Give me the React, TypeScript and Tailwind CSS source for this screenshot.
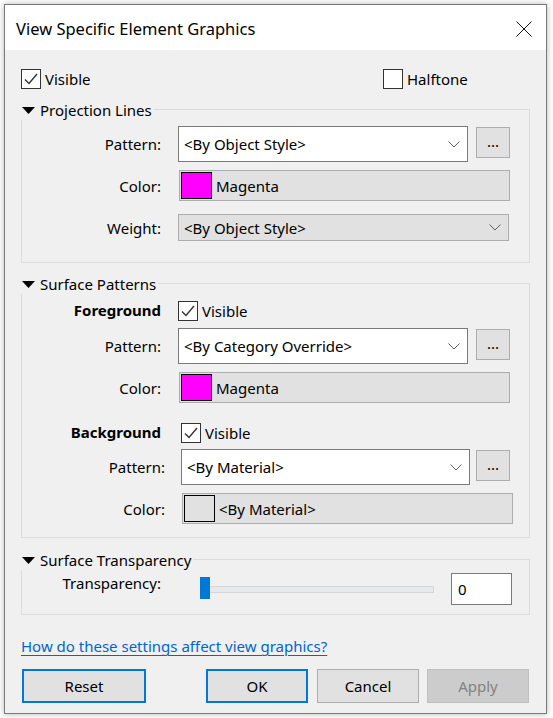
import React from "react";

function Chevron() {
  return (
    <svg width="12" height="7" viewBox="0 0 12 7" className="shrink-0">
      <polyline points="0.5,0.5 6,6 11.5,0.5" fill="none" stroke="#5f5f5f" strokeWidth="1" />
    </svg>
  );
}

function CheckBox({ checked }: { checked?: boolean }) {
  return (
    <span className="w-[20px] h-[20px] border border-[#333333] bg-white flex items-center justify-center shrink-0">
      {checked && (
        <svg width="18" height="18" viewBox="0 0 18 18">
          <polyline points="3,9.5 7,13.5 15,4" fill="none" stroke="#333333" strokeWidth="1.4" />
        </svg>
      )}
    </span>
  );
}

function GroupHeader({ title }: { title: string }) {
  return (
    <div className="flex items-end h-[20px]">
      <div className="flex items-center h-[20px] ml-[1px] pr-[2px]">
        <svg width="13" height="7" viewBox="0 0 13 7">
          <polygon points="0,0 13,0 6.5,7" fill="#000" />
        </svg>
        <span className="ml-[5px]">{title}</span>
      </div>
      <div className="flex-1 h-[11px] border-t border-r border-[#dcdcdc]" />
    </div>
  );
}

function Dropdown({ value, className }: { value: string; className: string }) {
  return (
    <div className={className}>
      <span>{value}</span>
      <Chevron />
    </div>
  );
}

function DotsButton() {
  return (
    <button className="w-[34px] h-[31px] bg-[#e1e1e1] border border-[#adadad] flex items-center justify-center leading-none pb-[2px]">
      ...
    </button>
  );
}

function ColorField({ swatch, label, className }: { swatch: string; label: string; className: string }) {
  return (
    <div className={className}>
      <span className={swatch} />
      <span className="ml-[4px]">{label}</span>
    </div>
  );
}

export default function App() {
  return (
    <div className="w-[553px] h-[718px] bg-white pt-[4px] pl-[4px] text-[15px] leading-[20px] text-black font-['Noto_Sans',sans-serif]">
      <div className="w-[543px] h-[710px] border border-[#7a7a7a] shadow-[0_0_6px_rgba(0,0,0,0.3)] flex flex-col">
        {/* title bar */}
        <div className="h-[45px] bg-white flex items-center justify-between pl-[11px] pr-[14px] pt-[2px]">
          <span className="text-[16.5px]">View Specific Element Graphics</span>
          <svg width="16" height="16" viewBox="0 0 16 16">
            <path d="M0.5 0.5 L15.5 15.5 M15.5 0.5 L0.5 15.5" stroke="#111" strokeWidth="1" />
          </svg>
        </div>

        <div className="flex-1 bg-[#f0f0f0] px-[16px] pt-[19px] flex flex-col">
          <div className="flex items-center h-[20px]">
            <label className="w-[362px] flex items-center gap-[4px]">
              <CheckBox checked />
              <span>Visible</span>
            </label>
            <label className="flex items-center gap-[4px]">
              <CheckBox />
              <span>Halftone</span>
            </label>
          </div>

          {/* Projection Lines */}
          <div className="mt-[11px]">
            <GroupHeader title="Projection Lines" />
            <div className="border-l border-r border-b border-[#dcdcdc] pt-[6px] pb-[21px]">
              <div className="flex items-center">
                <span className="w-[139px] text-right shrink-0">Pattern:</span>
                <Dropdown
                  value="<By Object Style>"
                  className="ml-[17px] w-[290px] h-[36px] bg-white border border-[#7a7a7a] flex items-center justify-between pl-[5px] pr-[7px]"
                />
                <span className="ml-[8px] mb-[3px]">
                  <DotsButton />
                </span>
              </div>
              <div className="flex items-center mt-[8px]">
                <span className="w-[139px] text-right shrink-0">Color:</span>
                <ColorField
                  swatch="w-[31px] h-[27px] bg-[#ff00ff] border border-black"
                  label="Magenta"
                  className="ml-[18px] w-[331px] h-[31px] bg-[#e1e1e1] border border-[#adadad] flex items-center pl-px"
                />
              </div>
              <div className="flex items-center mt-[13px]">
                <span className="w-[139px] text-right shrink-0">Weight:</span>
                <Dropdown
                  value="<By Object Style>"
                  className="ml-[17px] w-[331px] h-[27px] bg-[#e1e1e1] border border-[#adadad] flex items-center justify-between pl-[5px] pr-[7px]"
                />
              </div>
            </div>
          </div>

          {/* Surface Patterns */}
          <div className="mt-[11px]">
            <GroupHeader title="Surface Patterns" />
            <div className="border-l border-r border-b border-[#dcdcdc] pt-[7px] pb-[13px]">
              <div className="flex items-center h-[20px]">
                <span className="w-[139px] text-right shrink-0 font-bold pb-[3px]">Foreground</span>
                <label className="ml-[17px] flex items-center gap-[4px]">
                  <CheckBox checked />
                  <span>Visible</span>
                </label>
              </div>
              <div className="flex items-center mt-[7px]">
                <span className="w-[139px] text-right shrink-0">Pattern:</span>
                <Dropdown
                  value="<By Category Override>"
                  className="ml-[17px] w-[290px] h-[36px] bg-white border border-[#7a7a7a] flex items-center justify-between pl-[5px] pr-[7px]"
                />
                <span className="ml-[8px] mb-[3px]">
                  <DotsButton />
                </span>
              </div>
              <div className="flex items-center mt-[8px]">
                <span className="w-[139px] text-right shrink-0">Color:</span>
                <ColorField
                  swatch="w-[31px] h-[27px] bg-[#ff00ff] border border-black"
                  label="Magenta"
                  className="ml-[18px] w-[331px] h-[31px] bg-[#e1e1e1] border border-[#adadad] flex items-center pl-px"
                />
              </div>

              <div className="flex items-center h-[20px] mt-[20px]">
                <span className="w-[139px] text-right shrink-0 font-bold pb-[3px]">Background</span>
                <label className="ml-[20px] flex items-center gap-[4px]">
                  <CheckBox checked />
                  <span>Visible</span>
                </label>
              </div>
              <div className="flex items-center mt-[6px]">
                <span className="w-[143px] text-right shrink-0">Pattern:</span>
                <Dropdown
                  value="<By Material>"
                  className="ml-[16px] w-[289px] h-[36px] bg-white border border-[#7a7a7a] flex items-center justify-between pl-[5px] pr-[7px]"
                />
                <span className="ml-[6px] mb-[3px]">
                  <DotsButton />
                </span>
              </div>
              <div className="flex items-center mt-[8px]">
                <span className="w-[143px] text-right shrink-0">Color:</span>
                <ColorField
                  swatch="w-[31px] h-[27px] bg-[#e1e1e1] border border-black"
                  label="<By Material>"
                  className="ml-[17px] w-[331px] h-[31px] bg-[#e1e1e1] border border-[#adadad] flex items-center pl-px"
                />
              </div>
            </div>
          </div>

          {/* Surface Transparency */}
          <div className="mt-[12px]">
            <GroupHeader title="Surface Transparency" />
            <div className="border-l border-r border-b border-[#dcdcdc] pt-[3px] pb-[9px]">
              <div className="flex items-start">
                <span className="w-[139px] text-right shrink-0">Transparency:</span>
                <div className="ml-[39px] w-[234px] h-[32px] flex items-center relative">
                  <div className="w-full h-[7px] border border-[#d6d6d6] bg-[#e7eaea]" />
                  <div className="absolute left-0 top-[4px] w-[10px] h-[22px] bg-[#0078d7]" />
                </div>
                <div className="ml-[17px] w-[61px] h-[32px] bg-white border border-[#7a7a7a] flex items-center pl-[6px]">
                  0
                </div>
              </div>
            </div>
          </div>

          <a href="#" className="mt-[21px] self-start text-[#0066cc] underline underline-offset-[3px]">
            How do these settings affect view graphics?
          </a>

          <div className="flex mt-[13px]">
            <button className="ml-[1px] w-[124px] h-[34px] bg-[#e1e1e1] border-2 border-[#0078d7]">Reset</button>
            <button className="ml-[60px] w-[102px] h-[34px] bg-[#e1e1e1] border-2 border-[#0078d7]">OK</button>
            <button className="ml-[9px] w-[102px] h-[34px] bg-[#e1e1e1] border border-[#adadad]">Cancel</button>
            <button className="ml-[8px] w-[102px] h-[34px] bg-[#cccccc] border border-[#bfbfbf] text-[#838383]">
              Apply
            </button>
          </div>
        </div>
      </div>
    </div>
  );
}
